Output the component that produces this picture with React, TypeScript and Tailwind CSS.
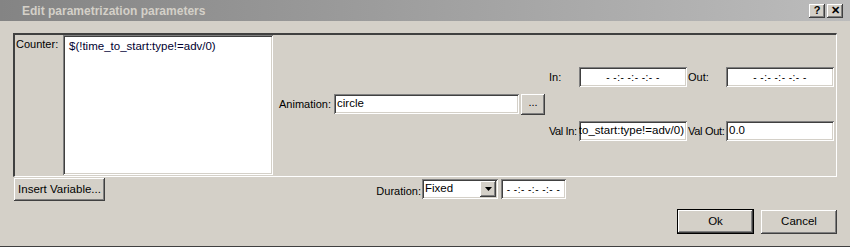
import React from 'react';

const raised =
  'bg-[#d4d0c8] shadow-[inset_-1px_-1px_#404040,inset_1px_1px_#ffffff,inset_-2px_-2px_#808080,inset_2px_2px_#d4d0c8]';
const sunken =
  'bg-white shadow-[inset_1px_1px_#808080,inset_-1px_-1px_#ffffff,inset_2px_2px_#404040,inset_-2px_-2px_#d4d0c8]';

const Field: React.FC<{ w: string; children?: React.ReactNode; className?: string }> = ({ w, children, className = '' }) => (
  <div className={`${w} h-[20px] ${sunken} flex items-center overflow-hidden px-[3px] whitespace-nowrap ${className}`}>
    {children}
  </div>
);

const Dashes: React.FC = () => <span className="text-[10px] tracking-[0.5px]">- -:- -:- -:- -</span>;

const App: React.FC = () => {
  return (
    <div
      className="w-[850px] h-[247px] bg-[#d4d0c8] text-[11px] text-black border-b border-[#404040] overflow-hidden whitespace-nowrap"
      style={{ fontFamily: '"Liberation Sans", Arial, sans-serif' }}
    >
      {/* title bar */}
      <div className="h-[21px] flex items-center bg-gradient-to-r from-[#848484] to-[#bcbcbc] pl-[22px] pr-[7px]">
        <span className="font-bold text-[12px] text-[#d4d0c8]">Edit parametrization parameters</span>
        <div className="ml-auto flex gap-[2px]">
          <div className={`w-[16px] h-[14px] ${raised} flex items-center justify-center font-bold text-[11px] leading-none`}>?</div>
          <div className={`w-[16px] h-[14px] ${raised} flex items-center justify-center font-bold text-[11px] leading-none`}>✕</div>
        </div>
      </div>

      <div className="pl-[13px] pr-[13px] pt-[12px]">
        {/* group frame */}
        <div className="w-[824px] h-[144px] border-l-2 border-t-2 border-[#404040] border-r border-r-white border-b border-b-white flex">
          <div className="w-[48px] pl-[1px] pt-[1px]">Counter:</div>
          <div className={`w-[210px] h-[140px] ${sunken} px-[6px] py-[3px] text-[11.5px] text-[#000030]`}>$(!time_to_start:type!=adv/0)</div>

          <div className="flex flex-col pt-[32px]">
            <div className="flex items-center h-[20px]">
              <span className="ml-[276px] w-[30px]">In:</span>
              <Field w="w-[108px]" className="justify-center"><Dashes /></Field>
              <span className="w-[39px] pl-[1px]">Out:</span>
              <Field w="w-[108px]" className="justify-center"><Dashes /></Field>
            </div>
            <div className="flex items-center h-[20px] mt-[7px]">
              <span className="ml-[6px] w-[55px]">Animation:</span>
              <Field w="w-[185px]" className="text-[11.5px]">circle</Field>
              <div className={`ml-[2px] w-[24px] h-[21px] ${raised} flex items-center justify-center pb-[4px]`}>...</div>
            </div>
            <div className="flex items-center h-[20px] mt-[7px]">
              <span className="ml-[276px] w-[30px] tracking-[-0.4px]">Val In:</span>
              <Field w="w-[108px]" className="justify-end text-[11.5px]">$(!time_to_start:type!=adv/0)</Field>
              <span className="w-[39px] pl-[1px] tracking-[-0.3px]">Val Out:</span>
              <Field w="w-[108px]" className="text-[11.5px]">0.0</Field>
            </div>
          </div>
        </div>

        {/* bottom row */}
        <div className="flex items-start mt-[1px]">
          <div className={`ml-[1px] w-[91px] h-[23px] ${raised} flex items-center justify-center text-[11.5px]`}>Insert Variable...</div>
          <span className="ml-[267px] mt-[5px] w-[50px] text-right pr-[1px]">Duration:</span>
          <div className={`w-[76px] h-[20px] ${sunken} flex items-center pl-[3px] pr-[2px] mt-[1px] text-[11.5px]`}>
            <span>Fixed</span>
            <div className={`ml-auto w-[16px] h-[16px] ${raised} flex items-center justify-center`}>
              <svg width="7" height="4" viewBox="0 0 7 4"><path d="M0 0h7L3.5 4z" fill="#000" /></svg>
            </div>
          </div>
          <Field w="w-[65px]" className="ml-[3px] mt-[1px] justify-center"><Dashes /></Field>
        </div>

        <div className="flex justify-end mt-[8px]">
          <div className="w-[77px] h-[25px] border border-black">
            <div className={`w-full h-full ${raised} flex items-center justify-center text-[11.5px]`}>Ok</div>
          </div>
          <div className={`ml-[7px] w-[76px] h-[24px] ${raised} flex items-center justify-center mt-[1px] text-[11.5px]`}>Cancel</div>
        </div>
      </div>
    </div>
  );
};

export default App;
